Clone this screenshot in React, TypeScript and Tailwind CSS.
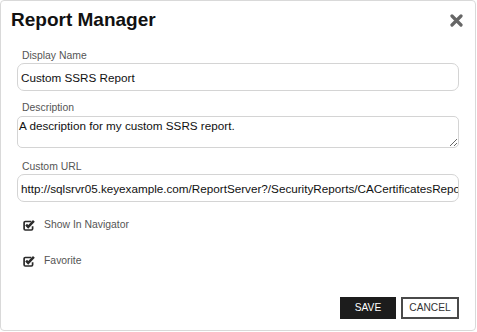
import React from 'react';

function CheckIcon() {
  return (
    <svg width="12" height="11" viewBox="0 0 12 11" className="shrink-0">
      <path
        d="M8.3 1.5H2.3a1.2 1.2 0 0 0-1.2 1.2v6.1a1.2 1.2 0 0 0 1.2 1.2h6.1a1.2 1.2 0 0 0 1.2-1.2V6.3"
        fill="none"
        stroke="#2b2b2b"
        strokeWidth="1.7"
      />
      <path d="M3.1 4.6l2.1 2.3L10.9 0.9" fill="none" stroke="#2b2b2b" strokeWidth="2.5" />
    </svg>
  );
}

function Field({ label, value, top }: { label: string; value: string; top: string }) {
  return (
    <div className={top}>
      <div className="pl-[5px] text-[10.4px] leading-[13px] text-[#555]">{label}</div>
      <input
        defaultValue={value}
        className="mt-[1px] block h-[28px] w-full rounded-[7px] border border-[#d4d4d4] bg-white pl-[3px] text-[11.7px] text-[#111] outline-none"
      />
    </div>
  );
}

export default function App() {
  return (
    <div className="h-[332px] w-[477px] bg-white" style={{ fontFamily: '"Liberation Sans", Arial, sans-serif' }}>
      <div className="h-[331px] w-[476px] rounded-[4px] border border-[#d9d9d9] bg-white">
        <div className="flex items-center justify-between pl-[10px] pr-[12px] pt-[7px]">
          <h1 className="text-[19px] font-bold leading-[24px] text-[#111]">Report Manager</h1>
          <svg width="13" height="13" viewBox="0 0 13 13" className="mt-[1px]">
            <path d="M2 2l9 9M11 2l-9 9" stroke="#666" strokeWidth="3.2" strokeLinecap="round" />
          </svg>
        </div>

        <div className="px-4">
          <Field label="Display Name" value="Custom SSRS Report" top="mt-[17px]" />

          <div className="mt-[10px]">
            <div className="pl-[5px] text-[10.4px] leading-[13px] text-[#555]">Description</div>
            <textarea
              defaultValue="A description for my custom SSRS report."
              className="mt-[2px] block h-[32px] w-full rounded-[5px] border border-[#d4d4d4] bg-white pl-[1px] text-[11.7px] text-[#111] outline-none"
            />
          </div>

          <Field
            label="Custom URL"
            value="http://sqlsrvr05.keyexample.com/ReportServer?/SecurityReports/CACertificatesReport"
            top="mt-[12px]"
          />

          <div className="ml-[6px] mt-[15px] flex h-[16px] items-center gap-[9px] text-[10.4px] text-[#555]">
            <CheckIcon />
            <span>Show In Navigator</span>
          </div>
          <div className="ml-[6px] mt-[20px] flex h-[16px] items-center gap-[9px] text-[10.4px] text-[#555]">
            <CheckIcon />
            <span>Favorite</span>
          </div>

          <div className="mt-[28px] flex justify-end gap-[5px]">
            <button className="h-[22px] w-[56px] bg-[#1c1c1c] text-[10.2px] text-white">SAVE</button>
            <button className="h-[22px] w-[58px] border-2 border-[#4a4a4a] bg-white text-[10.2px] text-[#333]">
              CANCEL
            </button>
          </div>
        </div>
      </div>
    </div>
  );
}
